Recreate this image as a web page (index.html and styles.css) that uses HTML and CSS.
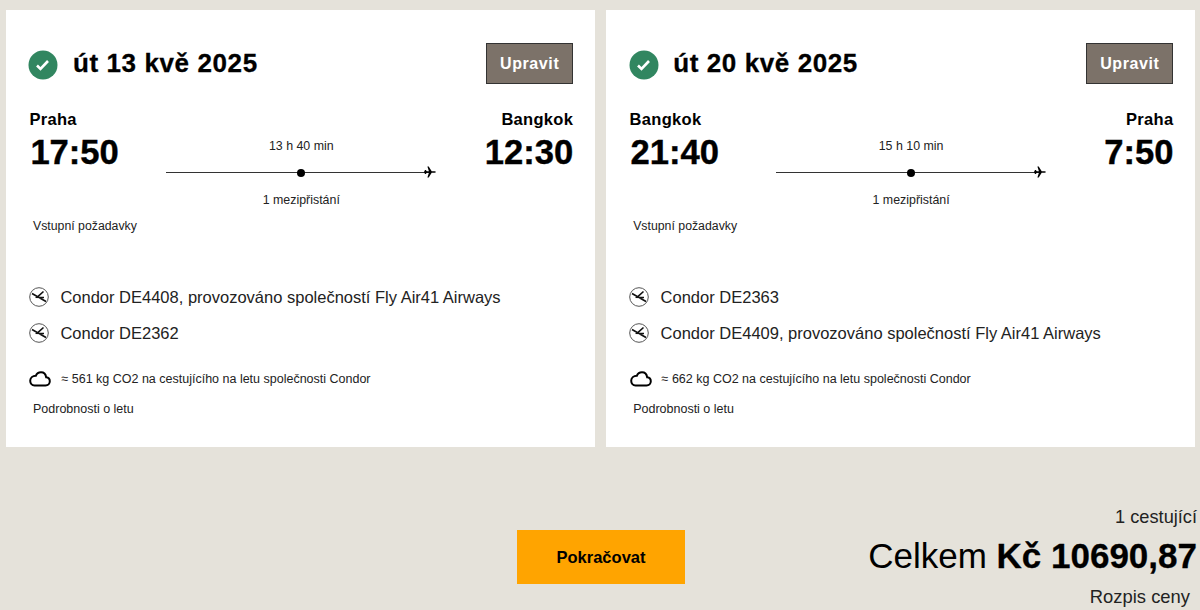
FILE: index.html
```html
<!DOCTYPE html>
<html lang="cs">
<head>
  <meta charset="UTF-8" />
  <title>Shrnutí letu</title>
  <link rel="stylesheet" href="styles.css">
</head>
<body>

  <div class="cards">
    <div class="card">
      <div class="card-head">
        <svg class="check" viewBox="0 0 30 30"><circle cx="15" cy="15" r="14.500" fill="#318660"/><path d="M9 15.500l3.500 3.500 7.500-8" fill="none" stroke="#fff" stroke-width="2.600"/></svg>
        <h2>út 13 kvě 2025</h2>
        <button class="edit">Upravit</button>
      </div>
      <div class="route">
        <div class="end">
          <div class="city">Praha</div>
          <div class="time">17:50</div>
        </div>
        <div class="path">
          <div class="dur">13 h 40 min</div>
          <div class="line">
            <span class="dot"></span>
            <svg class="plane" viewBox="0 0 12 12"><path d="M0 6l1-2h.8l1 1.300h2.100L3.400 .6h1.300l3 4.700h2.200c1 0 2.100 .3 2.100 .7s-1.100 .7-2.100 .7H7.700l-3 4.700H3.400l1.500-4.700H2.800l-1 1.300H1z"/></svg>
          </div>
          <div class="stops">1 mezipřistání</div>
        </div>
        <div class="end right">
          <div class="city">Bangkok</div>
          <div class="time">12:30</div>
        </div>
      </div>
      <div class="small-link">Vstupní požadavky</div>
      <div class="flights">
        <div class="flight">
          <svg class="airline" viewBox="0 0 20 20"><circle cx="10" cy="10" r="9.300" fill="none" stroke="#555" stroke-width="1"/><path d="M3 6.500l14 8M14.500 4.500L8 10.300l7 .2" fill="none" stroke="#111" stroke-width="1.600"/></svg>
          <span>Condor DE4408, provozováno společností Fly Air41 Airways</span>
        </div>
        <div class="flight">
          <svg class="airline" viewBox="0 0 20 20"><circle cx="10" cy="10" r="9.300" fill="none" stroke="#555" stroke-width="1"/><path d="M3 6.500l14 8M14.500 4.500L8 10.300l7 .2" fill="none" stroke="#111" stroke-width="1.600"/></svg>
          <span>Condor DE2362</span>
        </div>
      </div>
      <div class="co2">
        <svg class="cloud" viewBox="0 0 22 16"><path d="M5.500 14.500h11c2.500 0 4.300-1.800 4.300-4.200 0-2.200-1.600-3.800-3.600-4C16.700 3 14.600 1.200 12 1.200c-2.400 0-4.300 1.400-5.100 3.500C3.600 4.700 1.200 7 1.200 9.800c0 2.700 1.800 4.700 4.300 4.700z" fill="none" stroke="#000" stroke-width="2"/></svg>
        <span>≈ 561 kg CO2 na cestujícího na letu společnosti Condor</span>
      </div>
      <div class="small-link details">Podrobnosti o letu</div>
    </div>

    <div class="card">
      <div class="card-head">
        <svg class="check" viewBox="0 0 30 30"><circle cx="15" cy="15" r="14.500" fill="#318660"/><path d="M9 15.500l3.500 3.500 7.500-8" fill="none" stroke="#fff" stroke-width="2.600"/></svg>
        <h2>út 20 kvě 2025</h2>
        <button class="edit">Upravit</button>
      </div>
      <div class="route">
        <div class="end">
          <div class="city">Bangkok</div>
          <div class="time">21:40</div>
        </div>
        <div class="path">
          <div class="dur">15 h 10 min</div>
          <div class="line">
            <span class="dot"></span>
            <svg class="plane" viewBox="0 0 12 12"><path d="M0 6l1-2h.8l1 1.300h2.100L3.400 .6h1.300l3 4.700h2.200c1 0 2.100 .3 2.100 .7s-1.100 .7-2.100 .7H7.700l-3 4.700H3.400l1.500-4.700H2.800l-1 1.300H1z"/></svg>
          </div>
          <div class="stops">1 mezipřistání</div>
        </div>
        <div class="end right">
          <div class="city">Praha</div>
          <div class="time">7:50</div>
        </div>
      </div>
      <div class="small-link">Vstupní požadavky</div>
      <div class="flights">
        <div class="flight">
          <svg class="airline" viewBox="0 0 20 20"><circle cx="10" cy="10" r="9.300" fill="none" stroke="#555" stroke-width="1"/><path d="M3 6.500l14 8M14.500 4.500L8 10.300l7 .2" fill="none" stroke="#111" stroke-width="1.600"/></svg>
          <span>Condor DE2363</span>
        </div>
        <div class="flight">
          <svg class="airline" viewBox="0 0 20 20"><circle cx="10" cy="10" r="9.300" fill="none" stroke="#555" stroke-width="1"/><path d="M3 6.500l14 8M14.500 4.500L8 10.300l7 .2" fill="none" stroke="#111" stroke-width="1.600"/></svg>
          <span>Condor DE4409, provozováno společností Fly Air41 Airways</span>
        </div>
      </div>
      <div class="co2">
        <svg class="cloud" viewBox="0 0 22 16"><path d="M5.500 14.500h11c2.500 0 4.300-1.800 4.300-4.200 0-2.200-1.600-3.800-3.600-4C16.700 3 14.600 1.200 12 1.200c-2.400 0-4.300 1.400-5.100 3.500C3.600 4.700 1.200 7 1.200 9.800c0 2.700 1.800 4.700 4.300 4.700z" fill="none" stroke="#000" stroke-width="2"/></svg>
        <span>≈ 662 kg CO2 na cestujícího na letu společnosti Condor</span>
      </div>
      <div class="small-link details">Podrobnosti o letu</div>
    </div>
  </div>

  <div class="footer">
    <button class="continue">Pokračovat</button>
    <div class="summary">
      <div class="pax">1 cestující</div>
      <div class="total">Celkem <b>Kč 10690,87</b></div>
      <div class="breakdown">Rozpis ceny</div>
    </div>
  </div>

</body>
</html>
```

FILE: styles.css
```css
body {
  font-family: 'Liberation Sans', Arial, sans-serif;
  background-color: #e5e2da;
  color: #000;
  margin: 0;
  padding: 10px 4px 0 6px;
  height: 610px;
  box-sizing: border-box;
  overflow: hidden;
}

.cards {
  display: grid;
  grid-template-columns: 589.2px 589.2px;
  gap: 11px;
}

.card {
  background: #fff;
  height: 437px;
  box-sizing: border-box;
  padding: 32px 22px 0 23.4px;
}

.card-head {
  display: flex;
  align-items: center;
  height: 42px;
}

.check {
  width: 30px;
  height: 30px;
  margin: 4px 14.6px 0 -1px;
}

h2 {
  margin: 0;
  font-size: 26px;
  font-weight: bold;
  letter-spacing: 0.6px;
  -webkit-text-stroke: 0.3px #000;
  flex: 1;
}

.edit {
  width: 87px;
  height: 41px;
  background: #7c7269;
  color: #fff;
  font-family: inherit;
  font-size: 16px;
  font-weight: bold;
  letter-spacing: 0.6px;
  border: 1px solid #333;
  padding: 2px 0 0;
}

.route {
  display: flex;
  justify-content: space-between;
  margin-top: 25px;
}

.city {
  font-size: 16.5px;
  font-weight: bold;
  line-height: 20px;
  letter-spacing: 0.3px;
}

.time {
  font-size: 34.6px;
  font-weight: bold;
  -webkit-text-stroke: 0.4px #000;
  line-height: 40px;
  margin-top: 3px;
  margin-left: 1px;
}

.right {
  text-align: right;
}

.path {
  width: 270px;
  margin-top: 29px;
  font-size: 12.4px;
  text-align: center;
  color: #222;
}

.dur {
  line-height: 16px;
}

.line {
  position: relative;
  height: 1px;
  background: #333;
  margin: 18px 6px 0 0;
}

.dot {
  position: absolute;
  left: 131px;
  top: -3px;
  width: 8px;
  height: 8px;
  border-radius: 50%;
  background: #000;
}

.plane {
  position: absolute;
  right: -6px;
  top: -6px;
  width: 12px;
  height: 12px;
}

.stops {
  margin-top: 19px;
  line-height: 16px;
}

.small-link {
  font-size: 12.3px;
  line-height: 16px;
  color: #222;
  margin-left: 3.6px;
  margin-top: 10px;
}

.flights {
  margin-top: 53px;
  display: flex;
  flex-direction: column;
  gap: 16px;
}

.flight {
  display: flex;
  align-items: center;
  gap: 11.4px;
  font-size: 16.5px;
  line-height: 20px;
  color: #222;
}

.airline {
  width: 20px;
  height: 20px;
  margin-left: -0.4px;
}

.co2 {
  display: flex;
  align-items: center;
  gap: 10px;
  margin-top: 26px;
  font-size: 12.5px;
  line-height: 20px;
  color: #222;
}

.cloud {
  width: 22px;
  height: 16px;
}

.details {
  margin-top: 12px;
  font-size: 12.5px;
}

.footer {
  display: flex;
  align-items: flex-start;
  justify-content: flex-end;
  margin-top: 59px;
  position: relative;
}

.continue {
  width: 168px;
  height: 54px;
  margin-top: 24px;
  margin-right: 511px;
  background: #ffa400;
  border: none;
  font-family: inherit;
  font-size: 16.5px;
  font-weight: bold;
  color: #000;
}

.summary {
  position: absolute;
  right: -1px;
  top: 0;
  text-align: right;
}

.pax {
  font-size: 18.2px;
  line-height: 20px;
  color: #222;
  margin-top: 1px;
}

.total {
  font-size: 35px;
  line-height: 40px;
  margin-top: 9px;
}

.total b {
  font-weight: bold;
  -webkit-text-stroke: 0.3px #000;
}

.breakdown {
  font-size: 18.4px;
  line-height: 20px;
  margin-top: 11px;
  margin-right: 7px;
  color: #222;
}
```
